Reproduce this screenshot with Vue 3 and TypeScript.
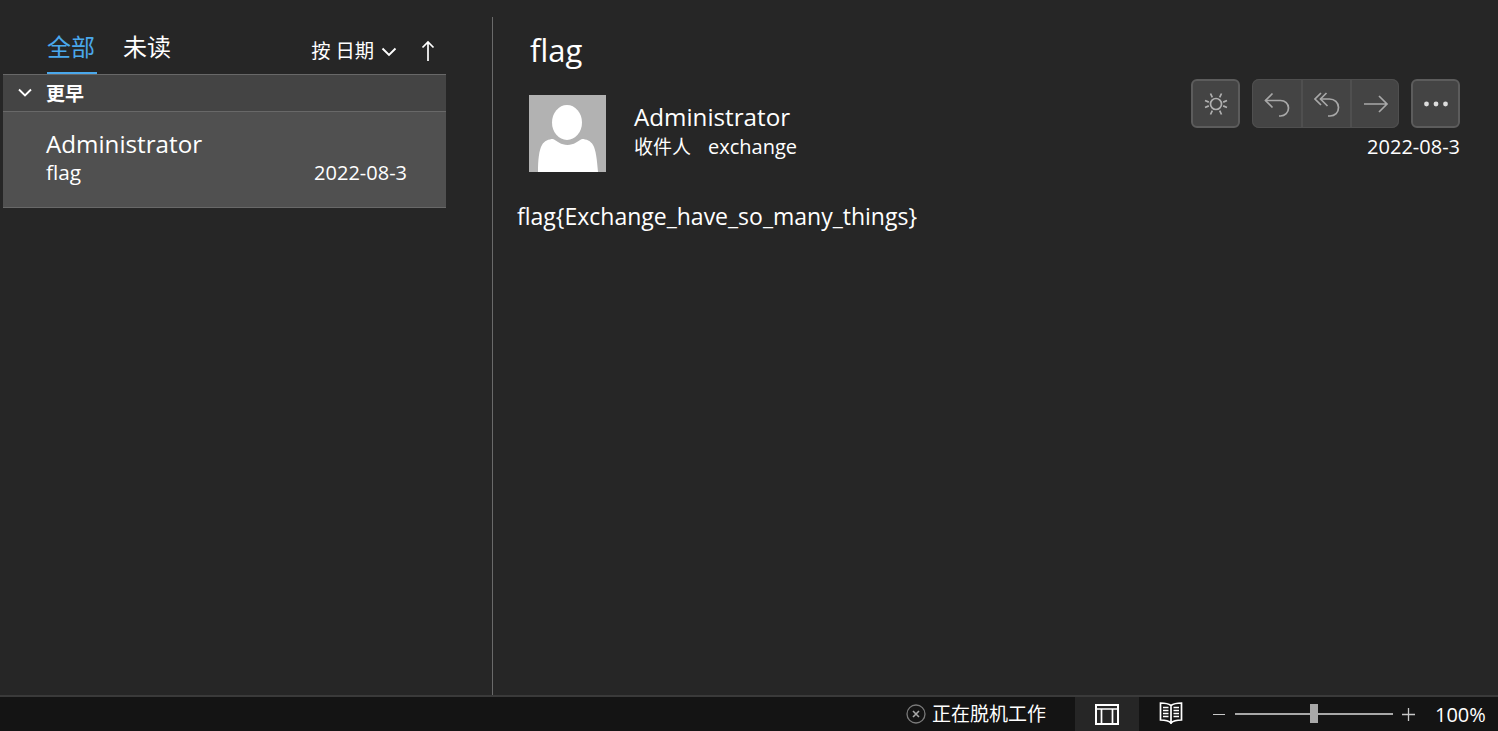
<template>
  <div class="window">
    <main class="main">
      <section class="list-pane">
        <div class="tabs-row">
          <div class="tabs">
            <div class="tab active">全部</div>
            <div class="tab">未读</div>
          </div>
          <div class="sort">
            <span>按 日期</span>
            <svg class="sort-chev" width="16" height="10" viewBox="0 0 16 10"><path d="M1.500 1.500 8 8l6.500-6.500" fill="none" stroke="#fff" stroke-width="1.900" /></svg>
            <svg class="sort-arrow" width="14" height="21" viewBox="0 0 14 21"><path d="M7 21V2M1.500 7.500 7 2l5.500 5.500" fill="none" stroke="#fff" stroke-width="1.700" /></svg>
          </div>
        </div>
        <div class="group">
          <svg class="group-chev" width="16" height="10" viewBox="0 0 16 10"><path d="M2 1.500 8 7.500l6-6" fill="none" stroke="#fff" stroke-width="1.900" /></svg>
          <span>更早</span>
        </div>
        <div class="item">
          <div class="item-from">Administrator</div>
          <div class="item-line">
            <span class="item-subject">flag</span>
            <span>2022-08-3</span>
          </div>
        </div>
      </section>
      <section class="read-pane">
        <h1 class="subject">flag</h1>
        <div class="header">
          <svg class="avatar" width="77" height="77" viewBox="0 0 77 77">
            <rect width="77" height="77" fill="#b2b2b2" />
            <ellipse cx="38" cy="27.500" rx="15" ry="17.500" fill="#fff" />
            <path d="M9 77C9 65 10 55 13 50 15 46 20 44 24 44 28 46 32 50 38.500 50 45 50 49 46 53 44 57 44 62 46 64 50 67 55 68 65 69 77Z" fill="#fff" />
          </svg>
          <div class="meta">
            <div class="sender">Administrator</div>
            <div class="to"><span class="to-label">收件人</span><span>exchange</span></div>
          </div>
          <div class="actions">
            <div class="buttons">
              <button class="btn single">
                <svg width="26" height="26" viewBox="0 0 26 26" fill="none" stroke="#b0b0b0" stroke-width="1.700"><circle cx="13" cy="13" r="5.500" /><path d="M2 9.500l3.800 1.600M20.200 14.900l3.800 1.600M2 16.500l3.800-1.600M20.200 11.100 24 9.500M7.500 2.500 9.300 6.300M16.700 19.700l1.800 3.800M18.500 2.500 16.700 6.300M9.300 19.700 7.500 23.500" /></svg>
              </button>
              <div class="btn-group">
                <button class="btn part">
                  <svg width="26" height="26" viewBox="0 0 26 26" fill="none" stroke="#a8a8a8" stroke-width="1.700"><path d="M8.500 2.500 1.500 9.500l7 7" /><path d="M1.500 9.500h15c4.500 0 8 3 8 7.500s-3.500 8-8 8h-1.500" /></svg>
                </button>
                <button class="btn part">
                  <svg width="26" height="26" viewBox="0 0 26 26" fill="none" stroke="#a8a8a8" stroke-width="1.700"><path d="M7 2 1 8l6 6" /><path d="M12.500 2 6.500 8l7 7" /><path d="M6.500 8h9c5 0 9 3.500 9 8.500s-3.500 8.500-8.500 8.500h-2" /></svg>
                </button>
                <button class="btn part">
                  <svg width="26" height="26" viewBox="0 0 26 26" fill="none" stroke="#a8a8a8" stroke-width="1.700"><path d="M1 13h23M16 5l8 8-8 8" /></svg>
                </button>
              </div>
              <button class="btn single more">
                <svg width="26" height="6" viewBox="0 0 26 6" fill="#ddd"><circle cx="3.500" cy="3" r="2.400" /><circle cx="13" cy="3" r="2.400" /><circle cx="22.500" cy="3" r="2.400" /></svg>
              </button>
            </div>
            <div class="date">2022-08-3</div>
          </div>
        </div>
        <div class="body">flag{Exchange_have_so_many_things}</div>
      </section>
    </main>
    <footer class="status">
      <div class="offline">
        <svg width="20" height="20" viewBox="0 0 20 20" fill="none"><circle cx="10" cy="10" r="9" stroke="#7a7a7a" stroke-width="1.300" /><path d="M7 7l6 6M13 7l-6 6" stroke="#a8a8a8" stroke-width="1.600" /></svg>
        <span class="offline-text">正在脱机工作</span>
      </div>
      <div class="view active-view">
        <svg width="24" height="21" viewBox="0 0 24 21" fill="none" stroke="#fff" stroke-width="2"><rect x="1" y="1" width="22" height="19" /><path d="M1 5h22M6.500 5v15M17.500 5v15" stroke-width="1.700" /></svg>
      </div>
      <div class="view">
        <svg class="book" width="24" height="23" viewBox="0 0 24 23" fill="none" stroke="#fff" stroke-width="1.700"><path d="M12 3.500C10 2 6 1 1.500 1v17c4.500 0 8.500 1 10.500 3 2-2 6-3 10.500-3V1C18 1 14 2 12 3.500ZM12 3.500V22" /><path d="M4 5.500h5.500M4 8.500h5.500M4 11.500h5.500M4 14.500h5.500M14.500 5.500H20M14.500 8.500H20M14.500 11.500H20M14.500 14.500H20" /></svg>
      </div>
      <div class="zoom">
        <span class="zoom-minus"></span>
        <div class="slider"><span class="thumb"></span></div>
        <svg class="zoom-plus" width="13" height="13" viewBox="0 0 13 13"><path d="M0 6.500h13M6.500 0v13" stroke="#c8c8c8" stroke-width="1.300" /></svg>
        <span class="pct">100%</span>
      </div>
    </footer>
  </div>
</template>

<script setup lang="ts">
</script>

<style>
html, body { margin: 0; background: #262626; }
</style>

<style scoped>
.window {
  width: 1498px;
  height: 731px;
  display: flex;
  flex-direction: column;
  background: #262626;
  color: #fff;
  font-family: "Open Sans", "Noto Sans CJK SC", sans-serif;
  overflow: hidden;
}
.main { flex: 1; display: flex; padding-top: 17px; min-height: 0; }
.list-pane {
  box-sizing: border-box;
  border-right: 1px solid #6a6a6a;
  width: 493px;
  padding-left: 3px;
}
.tabs-row {
  width: 443px;
  height: 57px;
  display: flex;
  justify-content: space-between;
  box-sizing: border-box;
  padding-left: 44px;
}
.tabs { display: flex; gap: 26px; }
.tab {
  font-size: 24px;
  line-height: 30px;
  height: 57px;
  box-sizing: border-box;
  padding-top: 15px;
  width: 50px;
  text-align: left;
}
.tab.active { color: #4aa8ec; border-bottom: 2px solid #4aa8ec; }
.sort {
  display: flex;
  align-items: center;
  font-size: 19.300px;
  height: 24px;
  margin-top: 21px;
  margin-right: 11px;
}
.sort-chev { margin-left: 7px; margin-top: 4px; }
.sort-arrow { margin-left: 24px; }
.group {
  width: 443px;
  height: 37px;
  box-sizing: border-box;
  border-top: 1px solid #686868;
  background: #444;
  display: flex;
  align-items: center;
  font-size: 19px;
  font-weight: 700;
  padding-left: 14px;
}
.group-chev { margin-right: 13px; }
.item {
  width: 443px;
  height: 97px;
  box-sizing: border-box;
  background: #505050;
  border-top: 1px solid #686868;
  border-bottom: 1px solid #686868;
  padding: 15px 39px 0 43px;
}
.item-from { font-size: 24.200px; line-height: 33px; }
.item-line { display: flex; justify-content: space-between; align-items: baseline; font-size: 20px; line-height: 24px; }
.item-subject { font-size: 20.800px; }
.read-pane { flex: 1; padding-left: 24px; min-width: 0; }
.subject {
  margin: 13px 0 0 13px;
  font-size: 31px;
  line-height: 40px;
  font-weight: 400;
}
.header { display: flex; margin-top: 25px; margin-left: 12px; height: 77px; }
.meta { margin-left: 28px; padding-top: 6px; }
.sender { font-size: 24.200px; line-height: 32px; }
.to { font-size: 20px; line-height: 26px; display: flex; gap: 17px; align-items: baseline; margin-top: 1px; }
.to-label { font-size: 19px; }
.actions {
  margin-left: auto;
  width: 270px;
  margin-right: 38px;
  margin-top: -16px;
  display: flex;
  flex-direction: column;
  align-items: flex-end;
}
.buttons { display: flex; gap: 12px; }
.btn {
  width: 49px;
  height: 49px;
  padding: 0;
  display: flex;
  align-items: center;
  justify-content: center;
  background: #444;
  border: 0;
}
.btn.single { border: 2px solid #5c5c5c; border-radius: 6px; box-sizing: border-box; }
.btn-group { display: flex; border-radius: 7px; overflow: hidden; background: #444; box-shadow: inset 0 0 0 1px #4f4f4f; }
.btn.part { border-left: 2px solid #4f4f4f; box-sizing: border-box; background: transparent; }
.btn.part:first-child { border-left: 0; }
.date { font-size: 20px; line-height: 24px; margin-top: 7px; }
.body { margin-top: 29px; font-size: 23px; line-height: 30px; }
.status {
  height: 36px;
  flex-shrink: 0;
  box-sizing: border-box;
  border-top: 2px solid #3a3a3a;
  background: #141414;
  display: flex;
  justify-content: flex-end;
  align-items: stretch;
}
.offline { display: flex; align-items: center; gap: 6px; font-size: 19px; width: 169px; box-sizing: border-box; }
.offline-text { margin-bottom: 2px; }
.view { width: 64px; display: flex; align-items: center; justify-content: center; }
.active-view { background: #262626; }
.book { margin-bottom: 1px; }
.zoom { display: flex; align-items: center; width: 295px; box-sizing: border-box; padding-left: 10px; font-size: 20px; }
.zoom-minus { width: 12px; height: 1px; background: #c8c8c8; }
.slider { position: relative; width: 158px; height: 2px; background: #a8a8a8; margin-left: 10px; }
.thumb { position: absolute; left: 75px; top: -9px; width: 8px; height: 19px; background: #a8a8a8; }
.zoom-plus { margin-left: 9px; }
.pct { margin-left: 20px; }
</style>
